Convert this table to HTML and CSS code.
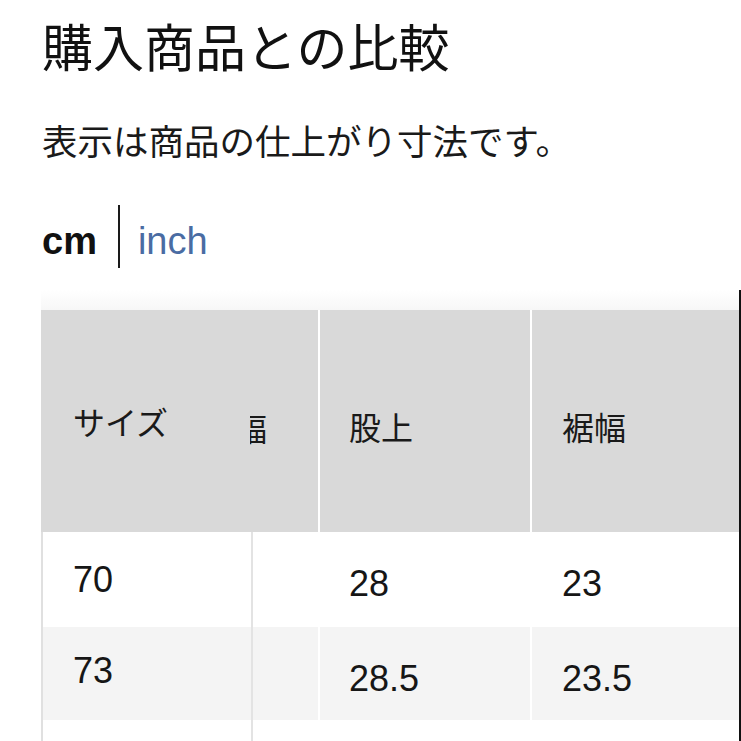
FILE: index.html
```html
<!DOCTYPE html>
<html lang="ja">
<head>
<meta charset="utf-8">
<title>購入商品との比較</title>
<link rel="stylesheet" href="styles.css">
</head>
<body>
<main class="page">
  <h1 class="title">購入商品との比較</h1>
  <p class="note">表示は商品の仕上がり寸法です。</p>
  <div class="units">
    <span class="unit unit-active">cm</span>
    <span class="unit-bar"></span>
    <span class="unit unit-link">inch</span>
  </div>
  <section class="table-area">
    <div class="size-table">
      <div class="row row-head">
        <div class="cell c1 jp">サイズ</div>
        <div class="cell c2 jp"><span class="clip">ワタリ幅</span></div>
        <div class="cell c3 jp shift">股上</div>
        <div class="cell c4 jp shift">裾幅</div>
      </div>
      <div class="row row-a">
        <div class="cell c1 num">70</div>
        <div class="cell c2"></div>
        <div class="cell c3 num shift">28</div>
        <div class="cell c4 num shift">23</div>
      </div>
      <div class="row row-b">
        <div class="cell c1 num">73</div>
        <div class="cell c2"></div>
        <div class="cell c3 num shift">28.5</div>
        <div class="cell c4 num shift">23.5</div>
      </div>
      <div class="row row-c">
        <div class="cell c1 num"></div>
        <div class="cell c2"></div>
        <div class="cell c3"></div>
        <div class="cell c4"></div>
      </div>
    </div>
  </section>
</main>
</body>
</html>
```
FILE: styles.css
```css
html, body {
  margin: 0;
  padding: 0;
  background: #ffffff;
}

body {
  width: 741px;
  height: 741px;
  overflow: hidden;
  color: #161616;
  font-family: "Noto Sans CJK JP", "Noto Sans", sans-serif;
}

.page {
  padding: 20px 0 0 42px;
}

.title {
  margin: 0;
  font-size: 51px;
  line-height: 50px;
  font-weight: 400;
  color: #111111;
  white-space: nowrap;
}

.note {
  margin: 52px 0 0;
  font-size: 35.5px;
  line-height: 35px;
  font-weight: 400;
  color: #1a1a1a;
  white-space: nowrap;
}

.units {
  margin-top: 48px;
  height: 63px;
  display: flex;
  align-items: flex-start;
}

.unit {
  font-family: "Liberation Sans", Arial, sans-serif;
  font-size: 38px;
  line-height: 38px;
  margin-top: 17px;
}

.unit-active {
  font-weight: 700;
  color: #111111;
}

.unit-link {
  color: #4a6ca3;
}

.unit-bar {
  width: 2px;
  height: 63px;
  background: #1a1a1a;
  margin: 0 18px 0 21px;
}

.table-area {
  margin-top: 22px;
  margin-left: -1px;
  padding-top: 20px;
  height: 431px;
  border-right: 2px solid #111111;
  background: linear-gradient(to bottom, #ffffff, #f7f7f7) no-repeat;
  background-size: 100% 20px;
}

.size-table {
  display: flex;
  flex-direction: column;
  background: #ffffff;
}

.row {
  display: flex;
}

.cell {
  display: flex;
  align-items: center;
  box-sizing: border-box;
  white-space: nowrap;
}

.jp {
  font-family: "Noto Sans CJK JP", "Noto Sans", sans-serif;
  font-size: 32px;
  line-height: 32px;
  color: #1a1a1a;
}

.num {
  font-family: "Liberation Sans", Arial, sans-serif;
  font-size: 36px;
  line-height: 36px;
  color: #161616;
}

.c1 {
  width: 209px;
  padding-left: 32px;
}

.c2 {
  width: 68px;
  overflow: hidden;
  justify-content: flex-end;
  padding-right: 51px;
}

.c3 {
  width: 210px;
  margin-left: 2px;
  padding-left: 29px;
}

.c4 {
  flex: 1;
  margin-left: 2px;
  padding-left: 30px;
}

.shift {
  padding-top: 10px;
}

.clip {
  flex: none;
}

/* header */
.row-head {
  height: 222px;
}

.row-head .cell {
  background: #d9d9d9;
}

.row-head .c2 {
  padding-top: 12px;
}

.row-a,
.row-b,
.row-c {
  background: #ffffff;
}

.row-a .c1,
.row-b .c1,
.row-c .c1 {
  width: 212px;
  padding-left: 30px;
  border-left: 2px solid #e0e0e0;
  border-right: 2px solid #e3e3e3;
}

.row-a .c2,
.row-b .c2,
.row-c .c2 {
  width: 65px;
}

.row-a {
  height: 95px;
}

.row-a .cell {
  background: #ffffff;
}

.row-a .shift {
  padding-top: 8px;
}

.row-b {
  height: 93px;
}

.row-b .cell {
  background: #f4f4f4;
}

.row-b .c1 {
  padding-bottom: 6px;
}

.row-b .shift {
  padding-top: 10px;
}

.row-c {
  height: 60px;
}

.row-c .cell {
  background: #ffffff;
}
```
